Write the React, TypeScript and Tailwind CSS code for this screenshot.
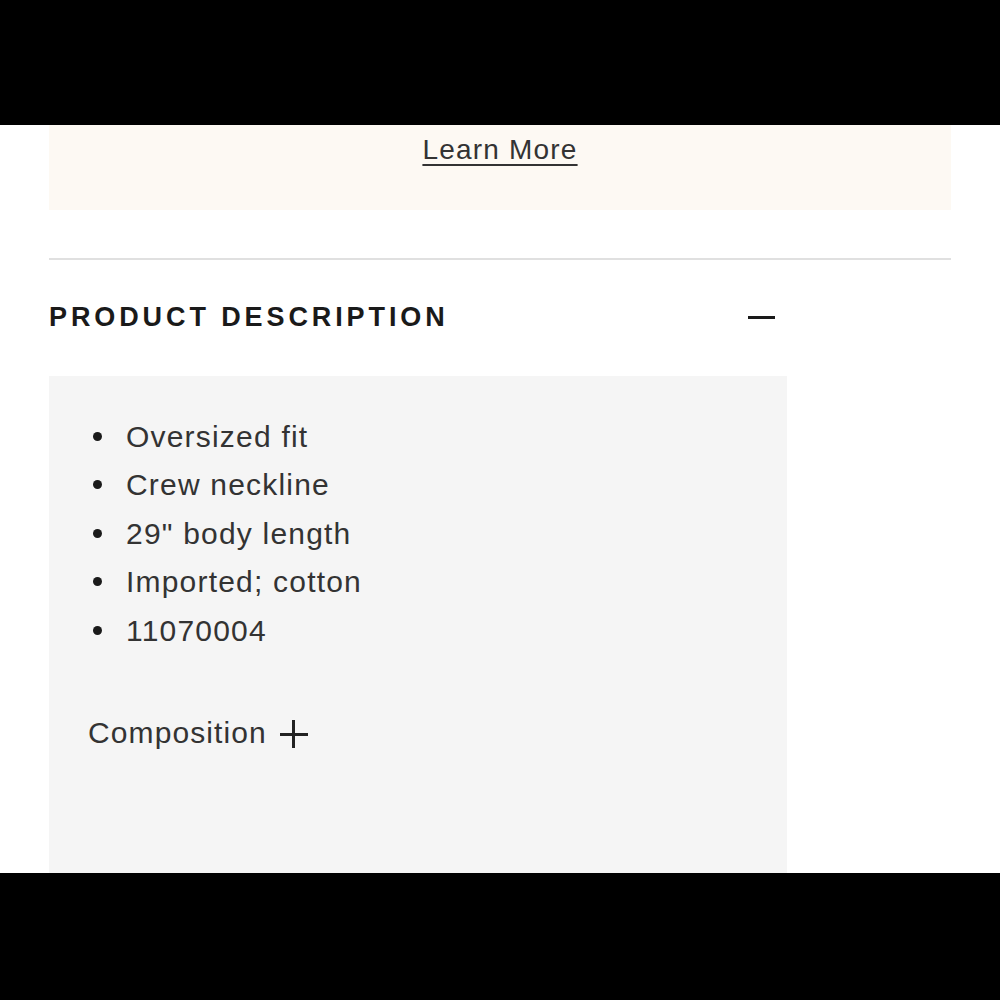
const details = [
  "Oversized fit",
  "Crew neckline",
  '29" body length',
  "Imported; cotton",
  "11070004",
];

export default function App() {
  return (
    <div className="flex h-[1000px] w-[1000px] flex-col bg-black font-['Liberation_Sans',sans-serif] text-[#2b2b2b]">
      <div className="h-[125px] shrink-0" />

      <div className="flex h-[748px] shrink-0 flex-col overflow-hidden bg-white px-[49px]">
        {/* promo strip */}
        <div className="flex h-[85px] shrink-0 justify-center bg-[#fdf9f3] pt-[9px]">
          <a
            href="#"
            className="text-[28px] leading-[32px] tracking-[1.2px] text-[#333] underline decoration-[2px] underline-offset-[5px]"
          >
            Learn More
          </a>
        </div>

        <div className="mt-[48px] h-[2px] shrink-0 bg-[#e0e0e0]" />

        {/* accordion */}
        <div className="flex w-[738px] flex-col">
          <div className="flex h-[116px] items-center justify-between pb-[2px] pr-[12px]">
            <h2 className="text-[27px] font-bold tracking-[3.9px] text-[#1a1a1a]">
              PRODUCT DESCRIPTION
            </h2>
            <span className="h-[3px] w-[27px] bg-[#1a1a1a]" />
          </div>

          <div className="flex h-[500px] flex-col bg-[#f5f5f5] px-[39px] pt-[36px]">
            <ul className="flex flex-col">
              {details.map((d) => (
                <li key={d} className="flex h-[48.5px] items-center">
                  <span className="ml-[5px] mr-[24px] h-[9px] w-[9px] rounded-full bg-[#1a1a1a]" />
                  <span className="text-[30px] tracking-[1.2px] text-[#333]">{d}</span>
                </li>
              ))}
            </ul>

            <button className="mt-[55px] flex items-center gap-[13px] self-start text-[30px] tracking-[1.1px] text-[#333]">
              Composition
              <span className="relative mt-[4px] h-[28px] w-[28px]">
                <span className="absolute left-0 top-[12.5px] h-[3px] w-[28px] bg-[#222]" />
                <span className="absolute left-[12.5px] top-0 h-[28px] w-[3px] bg-[#222]" />
              </span>
            </button>
          </div>
        </div>
      </div>
    </div>
  );
}
